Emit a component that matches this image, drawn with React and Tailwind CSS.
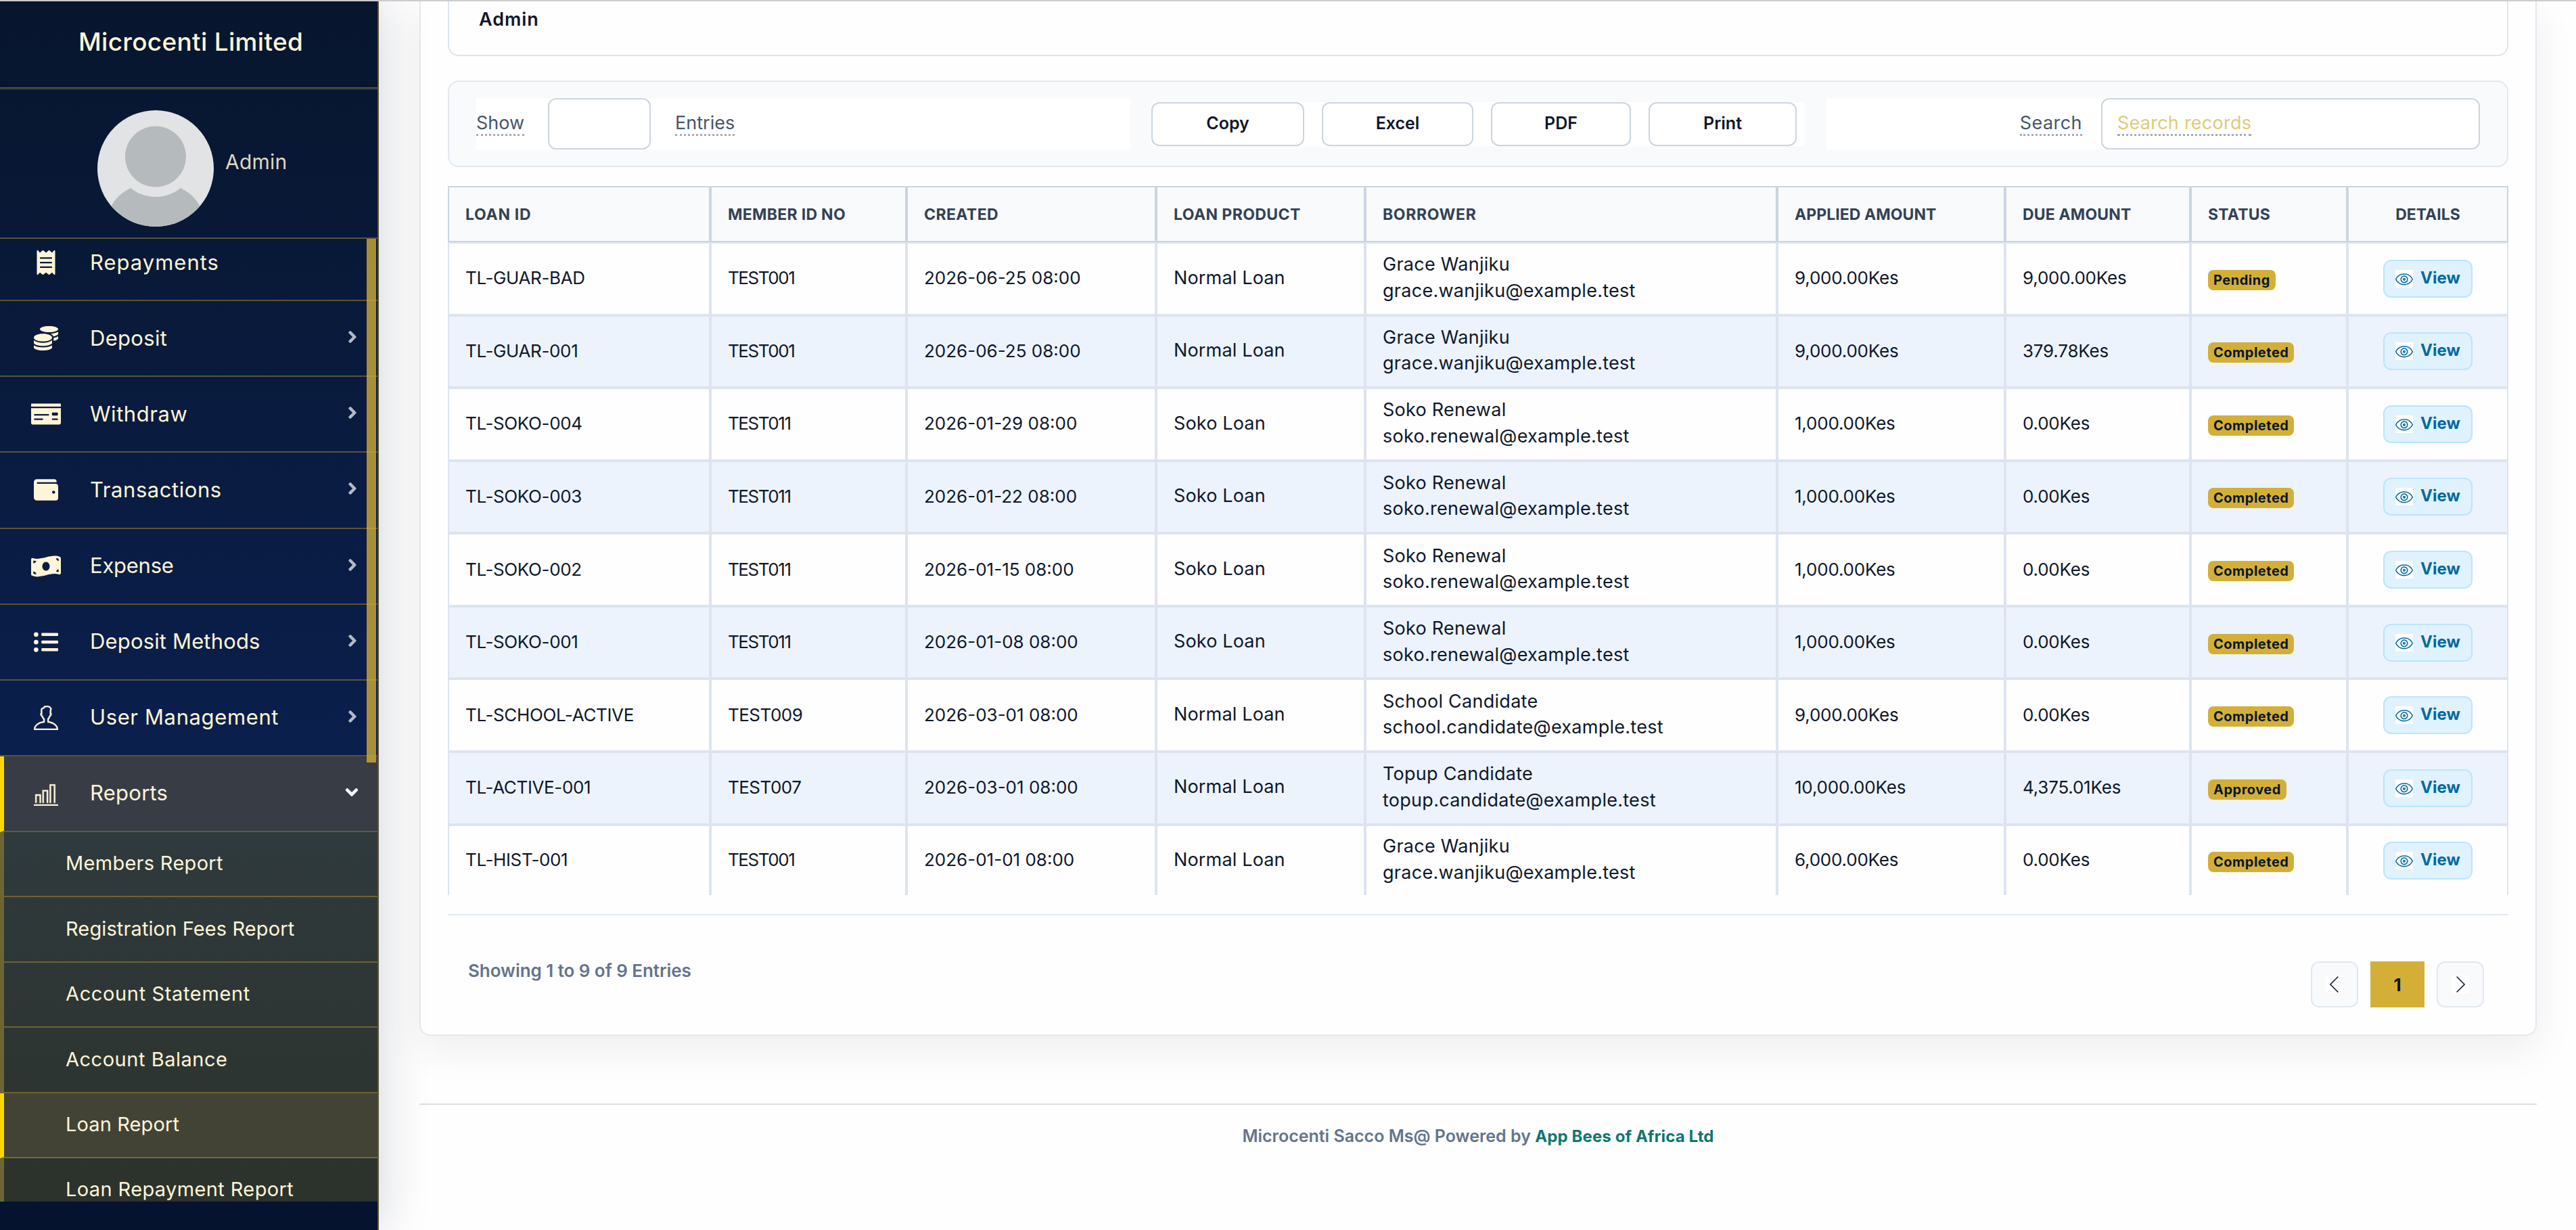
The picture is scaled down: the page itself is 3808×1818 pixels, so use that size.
import { useState } from 'react';
import {
  FaReceipt,
  FaCoins,
  FaMoneyCheck,
  FaWallet,
  FaMoneyBillWave,
  FaListUl,
  FaChevronRight,
  FaChevronDown
} from 'react-icons/fa';
import { TfiUser, TfiBarChart, TfiEye, TfiAngleLeft, TfiAngleRight } from 'react-icons/tfi';

const MENU = [
  { id: 'repayments', label: 'Repayments', icon: FaReceipt, size: 'h-9 w-9', tracking: 'tracking-[0.032em]' },
  { id: 'deposit', label: 'Deposit', icon: FaCoins, size: 'h-9 w-9', tracking: 'tracking-[0.01em]', children: true },
  { id: 'withdraw', label: 'Withdraw', icon: FaMoneyCheck, size: 'h-9 w-11', tracking: 'tracking-[0.018em]', children: true },
  { id: 'transactions', label: 'Transactions', icon: FaWallet, size: 'h-9 w-9', tracking: 'tracking-[0.018em]', children: true },
  { id: 'expense', label: 'Expense', icon: FaMoneyBillWave, size: 'h-9 w-11', tracking: 'tracking-[-0.008em]', children: true },
  { id: 'methods', label: 'Deposit Methods', icon: FaListUl, size: 'h-9 w-9', tracking: 'tracking-[0.005em]', children: true },
  { id: 'users', label: 'User Management', icon: TfiUser, size: 'h-9 w-9 stroke-[0.15] stroke-current', tracking: 'tracking-[0.02em]', children: true }
];

const REPORTS = [
  { label: 'Members Report', tracking: 'tracking-[0.01em]' },
  { label: 'Registration Fees Report', tracking: 'tracking-[0.004em]' },
  { label: 'Account Statement', tracking: 'tracking-[0.022em]' },
  { label: 'Account Balance', tracking: 'tracking-[0.018em]' },
  { label: 'Loan Report', tracking: 'tracking-[0.004em]' },
  { label: 'Loan Repayment Report', tracking: 'tracking-[0.013em]' }
];

const EXPORTS = [
  { label: 'Copy', width: 'w-[226px]' },
  { label: 'Excel', width: 'w-[224px]' },
  { label: 'PDF', width: 'w-[207px]' },
  { label: 'Print', width: 'w-[219px]' }
];

const COLUMNS = [
  { label: 'LOAN ID', tracking: 'tracking-[0.031em]' },
  { label: 'MEMBER ID NO', tracking: 'tracking-[0.013em]' },
  { label: 'CREATED', tracking: 'tracking-[0.018em]' },
  { label: 'LOAN PRODUCT', tracking: 'tracking-[0.018em]' },
  { label: 'BORROWER', tracking: 'tracking-[0.028em]' },
  { label: 'APPLIED AMOUNT', tracking: 'tracking-[0.003em]' },
  { label: 'DUE AMOUNT', tracking: 'tracking-[0.007em]' },
  { label: 'STATUS', tracking: 'tracking-[0.01em]' },
  { label: 'DETAILS', tracking: 'tracking-normal' }
];

const GRACE = { name: 'Grace Wanjiku', email: 'grace.wanjiku@example.test' };
const SOKO = { name: 'Soko Renewal', email: 'soko.renewal@example.test' };

const LOANS = [
  { id: 'TL-GUAR-BAD', member: 'TEST001', created: '2026-06-25 08:00', product: 'Normal Loan', borrower: GRACE, applied: '9,000.00', due: '9,000.00', status: 'Pending' },
  { id: 'TL-GUAR-001', member: 'TEST001', created: '2026-06-25 08:00', product: 'Normal Loan', borrower: GRACE, applied: '9,000.00', due: '379.78', status: 'Completed' },
  { id: 'TL-SOKO-004', member: 'TEST011', created: '2026-01-29 08:00', product: 'Soko Loan', borrower: SOKO, applied: '1,000.00', due: '0.00', status: 'Completed' },
  { id: 'TL-SOKO-003', member: 'TEST011', created: '2026-01-22 08:00', product: 'Soko Loan', borrower: SOKO, applied: '1,000.00', due: '0.00', status: 'Completed' },
  { id: 'TL-SOKO-002', member: 'TEST011', created: '2026-01-15 08:00', product: 'Soko Loan', borrower: SOKO, applied: '1,000.00', due: '0.00', status: 'Completed' },
  { id: 'TL-SOKO-001', member: 'TEST011', created: '2026-01-08 08:00', product: 'Soko Loan', borrower: SOKO, applied: '1,000.00', due: '0.00', status: 'Completed' },
  { id: 'TL-SCHOOL-ACTIVE', member: 'TEST009', created: '2026-03-01 08:00', product: 'Normal Loan', borrower: { name: 'School Candidate', email: 'school.candidate@example.test' }, applied: '9,000.00', due: '0.00', status: 'Completed' },
  { id: 'TL-ACTIVE-001', member: 'TEST007', created: '2026-03-01 08:00', product: 'Normal Loan', borrower: { name: 'Topup Candidate', email: 'topup.candidate@example.test' }, applied: '10,000.00', due: '4,375.01', status: 'Approved' },
  { id: 'TL-HIST-001', member: 'TEST001', created: '2026-01-01 08:00', product: 'Normal Loan', borrower: GRACE, applied: '6,000.00', due: '0.00', status: 'Completed' }
];

const GRID = 'grid grid-cols-[388px_290px_369px_309px_609px_337px_274px_232px_238px]';
const HINT = 'inline-block border-b-[3px] border-dotted border-[#a8abb8] leading-8 whitespace-nowrap';

function Avatar() {
  return (
    <svg viewBox="0 0 172 172" className="h-[172px] w-[172px] shrink-0">
      <defs>
        <clipPath id="avatar">
          <circle cx="86" cy="86" r="86" />
        </clipPath>
      </defs>
      <g clipPath="url(#avatar)">
        <rect width="172" height="172" fill="#e2e3e5" />
        <circle cx="86" cy="68.5" r="45" fill="#b5babc" />
        <path d="M49 115 C59 123 72 128 86 128 C100 128 113 123 123 115 C142 124 153 139 158 158 L158 172 H14 L14 158 C19 139 30 124 49 115 Z" fill="#b5babc" />
      </g>
    </svg>
  );
}

function Sidebar() {
  const [active, setActive] = useState('Loan Report');

  return (
    <aside className="relative z-10 flex h-full w-[560px] shrink-0 flex-col border-r-2 border-[#5c5239] bg-[linear-gradient(180deg,#07162d_0%,#0b1f4d_62%,#05132f_98%)] text-[#fff5d8] shadow-[0_0_70px_rgba(10,20,60,0.18)]">
      {/* Brand */}
      <div className="flex h-[131px] items-center border-b-2 border-[#5c5239] pb-[5px] pl-[116px] text-[37px] font-medium tracking-[0.008em]">
        Microcenti Limited
      </div>

      {/* Current user */}
      <div className="flex h-[222px] items-start border-y-2 border-t-[#1b2947] border-b-[#5c5239] pt-[30px] pl-36">
        <Avatar />
        <span className="ml-[17px] pt-[58px] text-[30px] leading-9 tracking-[0.008em] text-[#dfd7c1]">Admin</span>
      </div>

      {/* Navigation */}
      <nav className="relative h-[1423px] overflow-hidden">
        <div className="-mt-5">
          {MENU.map((item) => (
            <a key={item.id} className="flex h-[112.14px] items-center border-b-2 border-[#5c5239]">
              <span className="ml-[46px] flex w-11 justify-center">
                <item.icon className={item.size} />
              </span>
              <span className={`ml-[43px] pb-px text-[31px] leading-9 ${item.tracking}`}>{item.label}</span>
              {item.children && <FaChevronRight className="mr-[31px] mb-1 ml-auto h-5 w-3 stroke-[36] stroke-current text-[#b5bac6]" />}
            </a>
          ))}

          <a className="flex h-[112.14px] items-center border-b-2 border-l-[6px] border-b-[#655b37] border-l-[#ffd700] bg-[#383c45]">
            <span className="ml-10 flex w-11 justify-center">
              <TfiBarChart className="h-9 w-9 stroke-[0.15] stroke-current" />
            </span>
            <span className="ml-[43px] pb-px text-[31px] leading-9 tracking-[0.008em]">Reports</span>
            <FaChevronDown className="mr-7 mb-1 ml-auto h-5 w-5 stroke-[36] stroke-current text-white" />
          </a>

          <div className="bg-[linear-gradient(180deg,#2f3a3d_0%,#2c322b_100%)]">
            {REPORTS.map((r) => (
              <a
                key={r.label}
                onClick={() => setActive(r.label)}
                className={`
                  flex h-[96.4px] items-center border-b-2 border-l-[6px] pb-[2px] pl-[91px]
                  text-[29px] ${r.tracking}
                  ${active === r.label
                    ? 'border-b-[#7b6a30] border-l-[#ffd700] bg-[#434335]'
                    : 'border-b-[#6d6333] border-l-[#6d6535]'
                  }
                `}
              >
                {r.label}
              </a>
            ))}
          </div>
        </div>
        <div className="absolute top-0 right-[2px] h-[774px] w-[14px] bg-[#d4af37]/78" />
      </nav>
    </aside>
  );
}

function Toolbar() {
  const [query, setQuery] = useState('');

  return (
    <div className="mt-9 grid h-32 grid-cols-3 items-center gap-8 rounded-2xl border-2 border-[#e2e8f0] bg-[#f8fafc] px-10 text-[27px] text-[#475569]">
      <div className="flex h-[76px] items-center bg-white">
        <span className={HINT}>Show</span>
        <div className="mr-9 ml-[35px] h-[76px] w-[152px] rounded-xl border-2 border-[#cbd5e1] bg-white" />
        <span className={HINT}>Entries</span>
      </div>

      <div className="flex h-[65px] gap-[26px] bg-white">
        {EXPORTS.map((b) => (
          <button
            key={b.label}
            className={`h-[65px] rounded-xl border-2 border-[#cbd5e1] bg-white pb-px text-[25px] font-semibold text-[#0f172a] ${b.width}`}
          >
            {b.label}
          </button>
        ))}
      </div>

      <div className="flex h-[76px] items-center justify-end bg-white">
        <span className={`${HINT} tracking-[0.016em]`}>Search</span>
        <label className="ml-7 flex h-[76px] w-[560px] items-center rounded-xl border-2 border-[#cbd5e1] bg-white pl-[22px]">
          <span className={`${HINT} tracking-[0.009em] text-[#dfcb78]`}>{query || 'Search records'}</span>
          <input className="w-0 opacity-0" value={query} onChange={(e) => setQuery(e.target.value)} />
        </label>
      </div>
    </div>
  );
}

function LoanRow({ loan, odd, last }) {
  const cell = `flex items-center border-2 border-[#dce4ef] ${last ? 'border-b-0' : ''}`;
  const text = `${cell} pb-0.5 pl-6`;

  return (
    <div className={`${GRID} ${last ? 'h-[104.5px]' : 'h-[107.57px]'} ${odd ? 'bg-[#ecf3fc]' : ''}`}>
      <div className={`${text} tracking-[-0.014em]`}>{loan.id}</div>
      <div className={`${text} ${loan.member.endsWith('1') ? 'tracking-[-0.055em]' : 'tracking-[-0.02em]'}`}>{loan.member}</div>
      <div className={text}>{loan.created}</div>
      <div className={`${text} text-[27px] tracking-[0.006em]`}>{loan.product}</div>
      <div className={`${text} text-[27px] tracking-[0.01em]`}>
        <p className="leading-[38.5px]">
          {loan.borrower.name}
          <br />
          {loan.borrower.email}
        </p>
      </div>
      <div className={`${text} tracking-[-0.008em]`}>{loan.applied}Kes</div>
      <div className={`${text} tracking-[-0.008em]`}>{loan.due}Kes</div>
      <div className={`${cell} pt-1 pl-6`}>
        <span className="flex h-[30px] items-center rounded-lg bg-[#d4af37] px-2 text-[20px] font-bold tracking-[0.025em] text-[#07162d]">
          {loan.status}
        </span>
      </div>
      <div className={`${cell} justify-center`}>
        <button className="flex h-14 w-[132px] items-center rounded-xl border-2 border-[#bae6fd] bg-[#e0f2fe] pl-4 text-2xl font-bold text-[#0369a1]">
          <TfiEye className="h-[26px] w-[26px] bg-white" />
          <span className="ml-[11px] pb-0.5">View</span>
        </button>
      </div>
    </div>
  );
}

export default function App() {
  return (
    <div className="relative flex h-[1818px] w-[3808px] overflow-hidden bg-[#fefefe] font-['Inter',sans-serif]">
      <Sidebar />

      <main className="flex-1 pr-[58px] pl-[60px]">
        {/* Report card */}
        <section className="h-[1531px] rounded-b-2xl border-2 border-t-0 border-[#e2e8f0] bg-[#fefefe] px-10 shadow-[0_20px_60px_rgba(0,0,0,0.07)]">
          <div className="flex h-[83px] items-start rounded-b-2xl border-2 border-t-0 border-[#dce4ef] pt-[13px] pl-11 text-[27px] leading-8 font-semibold tracking-[0.035em] text-[#0f172a]">
            Admin
          </div>

          <Toolbar />

          {/* Loans table */}
          <div className="mt-7 text-[26px] text-[#0f172a]">
            <div className={`${GRID} h-[83px] bg-[#f8fafc] text-[23px] font-bold text-[#334155]`}>
              {COLUMNS.map((c) => (
                <div
                  key={c.label}
                  className={`flex items-center border-2 border-[#cbd5e1] pt-px ${c.tracking} ${c.label === 'DETAILS' ? 'justify-center' : 'pl-6'}`}
                >
                  {c.label}
                </div>
              ))}
            </div>
            {LOANS.map((loan, idx) => (
              <LoanRow key={loan.id} loan={loan} odd={idx % 2 === 1} last={idx === LOANS.length - 1} />
            ))}
          </div>

          {/* Pagination */}
          <div className="mt-7 flex items-start justify-between border-t-2 border-[#e2e8f0] pt-[68px] pr-9 pl-[30px]">
            <p className="-mt-0.5 text-[26px] leading-8 font-semibold tracking-[-0.002em] text-[#64748b]">Showing 1 to 9 of 9 Entries</p>
            <div className="flex h-[68px] gap-[18px] text-[#07162d]">
              <button className="flex w-[70px] items-center justify-center rounded-xl border-2 border-[#e2e8f0] bg-[#f8fafc]">
                <TfiAngleLeft className="h-[26px] w-[26px] bg-white" />
              </button>
              <button className="w-20 bg-[#d4af37] text-[26px] font-bold">1</button>
              <button className="flex w-[70px] items-center justify-center rounded-xl border-2 border-[#e2e8f0] bg-[#f8fafc]">
                <TfiAngleRight className="h-[26px] w-[26px] bg-white" />
              </button>
            </div>
          </div>
        </section>

        {/* Footer */}
        <footer className="relative mt-[100px] border-t-2 border-[#d8dee4] pt-[30px] text-center text-[25px] leading-8 font-semibold text-[#64748b]">
          Microcenti Sacco Ms@ Powered by <span className="text-2xl leading-8 font-bold tracking-[0.005em] text-[#0f766e]">App Bees of Africa Ltd</span>
        </footer>
      </main>

      {/* Window edge */}
      <div className="absolute inset-x-0 top-0 z-20 h-0.5 bg-[#cccccc]" />
    </div>
  );
}
